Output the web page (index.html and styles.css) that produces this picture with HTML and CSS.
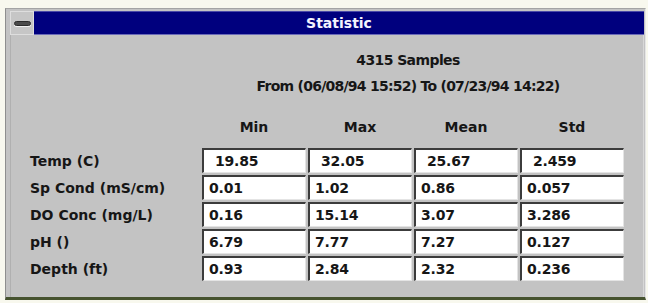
FILE: index.html
```html
<!DOCTYPE html>
<html>
<head>
<meta charset="utf-8">
<link rel="stylesheet" href="styles.css">
</head>
<body>
<div class="window">
  <div class="titlebar">
    <div class="sysmenu"><span class="dash"></span></div>
    <div class="caption">Statistic</div>
  </div>
  <div class="client">
    <div class="summary">
      <div class="line samples">4315 Samples</div>
      <div class="line from">From (06/08/94 15:52) To (07/23/94 14:22)</div>
    </div>
    <div class="grid head">
      <div></div>
      <div class="hcell">Min</div>
      <div class="hcell">Max</div>
      <div class="hcell">Mean</div>
      <div class="hcell">Std</div>
    </div>
    <div class="grid rows">
      <div class="label">Temp (C)</div>
      <div class="cell first">19.85</div>
      <div class="cell first">32.05</div>
      <div class="cell first">25.67</div>
      <div class="cell first">2.459</div>

      <div class="label">Sp Cond (mS/cm)</div>
      <div class="cell">0.01</div>
      <div class="cell">1.02</div>
      <div class="cell">0.86</div>
      <div class="cell">0.057</div>

      <div class="label">DO Conc (mg/L)</div>
      <div class="cell">0.16</div>
      <div class="cell">15.14</div>
      <div class="cell">3.07</div>
      <div class="cell">3.286</div>

      <div class="label">pH ()</div>
      <div class="cell">6.79</div>
      <div class="cell">7.77</div>
      <div class="cell">7.27</div>
      <div class="cell">0.127</div>

      <div class="label">Depth (ft)</div>
      <div class="cell">0.93</div>
      <div class="cell">2.84</div>
      <div class="cell">2.32</div>
      <div class="cell">0.236</div>
    </div>
  </div>
</div>
</body>
</html>
```

FILE: styles.css
```css
* { box-sizing: border-box; }
html, body { margin: 0; padding: 0; }
body {
  width: 648px;
  height: 303px;
  background: #f8f8ee;
  overflow: hidden;
  font-family: "DejaVu Sans", "Liberation Sans", sans-serif;
  font-weight: bold;
  font-size: 14px;
  color: #161616;
}
.window {
  margin: 8px 0 0 5px;
  width: 641px;
  height: 292px;
  background: #c3c3c3;
  border-style: solid;
  border-width: 1px 1px 3px 1px;
  border-color: #a4a4a4 #e6e6e6 #46532f #8e8e8e;
  padding: 2px 1px 0 4px;
  display: flex;
  flex-direction: column;
}
.titlebar {
  height: 24px;
  display: flex;
  flex: none;
}
.sysmenu {
  width: 24px;
  height: 24px;
  background: #c6c6c6;
  border: 1px solid #dedede;
  display: flex;
  align-items: center;
  justify-content: center;
}
.dash {
  display: block;
  width: 17px;
  height: 5px;
  border-radius: 3px;
  background: #4a4a4a;
  border: 1px solid #2a2a2a;
  box-shadow: 0 1px 0 #f0f0f0;
}
.caption {
  flex: 1;
  background: #00007e;
  border-top: 1px solid #4a4aa8;
  border-bottom: 1px solid #6a6ab8;
  color: #f4f4ff;
  font-size: 14px;
  text-align: center;
  line-height: 23px;
}
.client {
  flex: 1;
  border-left: 1px solid #b0b0b0;
  border-right: 1px solid #d8d8d8;
  padding: 17px 0 0 19px;
}
.summary {
  margin-left: 170px;
  width: 416px;
  text-align: center;
}
.line {
  line-height: 16px;
}
.line.samples {
  letter-spacing: -0.6px;
}
.line.from {
  margin-top: 10px;
  letter-spacing: -0.75px;
}
.grid {
  display: grid;
  grid-template-columns: 170px 104px 104px 104px 104px;
  column-gap: 2px;
}
.head {
  margin-top: 25px;
  line-height: 16px;
}
.hcell {
  text-align: center;
}
.rows {
  margin-top: 13px;
  row-gap: 2px;
  grid-auto-rows: 25px;
}
.label {
  display: flex;
  align-items: center;
}
.cell {
  background: #ffffff;
  border-style: solid;
  border-width: 2px 1px 1px 2px;
  border-color: #3c3c3c #e4e4e4 #e4e4e4 #3c3c3c;
  padding-left: 5px;
  display: flex;
  align-items: center;
  letter-spacing: -0.2px;
}
.cell.first {
  padding-left: 11px;
}
```
